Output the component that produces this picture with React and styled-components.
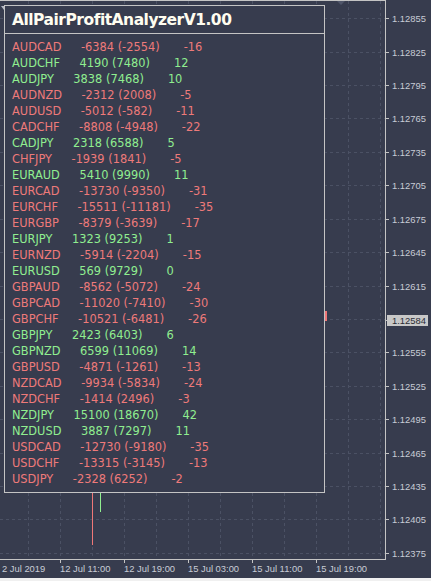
import React from 'react';
import styled, { createGlobalStyle } from 'styled-components';

const BG = '#373c4e';
const GRID = '#4b5164';
const AXIS = '#c4c4c4';
const LABEL = '#c8ccd6';

const pairs = [
  ['AUDCAD', -6384, -2554, -16],
  ['AUDCHF', 4190, 7480, 12],
  ['AUDJPY', 3838, 7468, 10],
  ['AUDNZD', -2312, 2008, -5],
  ['AUDUSD', -5012, -582, -11],
  ['CADCHF', -8808, -4948, -22],
  ['CADJPY', 2318, 6588, 5],
  ['CHFJPY', -1939, 1841, -5],
  ['EURAUD', 5410, 9990, 11],
  ['EURCAD', -13730, -9350, -31],
  ['EURCHF', -15511, -11181, -35],
  ['EURGBP', -8379, -3639, -17],
  ['EURJPY', 1323, 9253, 1],
  ['EURNZD', -5914, -2204, -15],
  ['EURUSD', 569, 9729, 0],
  ['GBPAUD', -8562, -5072, -24],
  ['GBPCAD', -11020, -7410, -30],
  ['GBPCHF', -10521, -6481, -26],
  ['GBPJPY', 2423, 6403, 6],
  ['GBPNZD', 6599, 11069, 14],
  ['GBPUSD', -4871, -1261, -13],
  ['NZDCAD', -9934, -5834, -24],
  ['NZDCHF', -1414, 2496, -3],
  ['NZDJPY', 15100, 18670, 42],
  ['NZDUSD', 3887, 7297, 11],
  ['USDCAD', -12730, -9180, -35],
  ['USDCHF', -13315, -3145, -13],
  ['USDJPY', -2328, 6252, -2],
];

const prices = [
  '1.12855', '1.12825', '1.12795', '1.12765', '1.12735', '1.12705',
  '1.12675', '1.12645', '1.12615', null, '1.12555', '1.12525',
  '1.12495', '1.12465', '1.12435', '1.12405', '1.12375',
];

const times = [
  { x: 2, text: '2 Jul 2019', tick: false },
  { x: 60, text: '12 Jul 11:00', tick: true },
  { x: 124, text: '12 Jul 19:00', tick: true },
  { x: 188, text: '15 Jul 03:00', tick: true },
  { x: 252, text: '15 Jul 11:00', tick: true },
  { x: 316, text: '15 Jul 19:00', tick: true },
];

const priceY = i => Math.round(18.3 + 33.4 * i) + 0.5;

function PriceChart() {
  const vLines = [];
  for (let x = 28; x <= 380; x += 32) vLines.push(x + 0.5);

  return (
    <ChartSvg width="431" height="578" viewBox="0 0 431 578">
      <rect x="0" y="0" width="431" height="578" fill={BG} />
      {/* grid */}
      {vLines.map(x => (
        <line key={x} x1={x} x2={x} y1="1" y2="559" stroke={GRID} strokeDasharray="3 3" />
      ))}
      {prices.map((p, i) => (
        <line key={i} x1="0" x2="385" y1={priceY(i)} y2={priceY(i)} stroke={GRID} strokeDasharray="3 3" />
      ))}
      {/* frame */}
      <line x1="0" x2="386" y1="0.5" y2="0.5" stroke={AXIS} />
      <line x1="385.5" x2="385.5" y1="0" y2="560" stroke={AXIS} />
      <line x1="0" x2="386" y1="559.5" y2="559.5" stroke={AXIS} />
      <polygon points="337,1 345,1 341,5" fill="#50566a" />
      <polygon points="1,6 7,6 4,10" fill="#b8bcc6" />
      {/* candles */}
      <line x1="92.5" x2="92.5" y1="480" y2="545" stroke="#f07878" />
      <line x1="100.5" x2="100.5" y1="480" y2="512" stroke="#90ee90" />
      <rect x="324" y="311" width="3" height="10" fill="#f07878" />
      {/* price axis */}
      {prices.map((p, i) =>
        p ? (
          <g key={p}>
            <line x1="386" x2="389" y1={priceY(i)} y2={priceY(i)} stroke={AXIS} />
            <AxisText x="392" y={priceY(i) + 3.5}>{p}</AxisText>
          </g>
        ) : null,
      )}
      <line x1="386" x2="389" y1="320.5" y2="320.5" stroke={AXIS} />
      <rect x="387" y="315" width="41" height="11" fill="#c8c8c8" />
      <AxisText x="392" y="324" dark>1.12584</AxisText>
      {/* time axis */}
      {times.map(t => (
        <g key={t.text}>
          {t.tick && <line x1={t.x + 0.5} x2={t.x + 0.5} y1="560" y2="563" stroke={AXIS} />}
          <AxisText x={t.x} y="572">{t.text}</AxisText>
        </g>
      ))}
    </ChartSvg>
  );
}

function ProfitPanel() {
  return (
    <Panel>
      <PanelTitle>AllPairProfitAnalyzerV1.00</PanelTitle>
      <PanelBody>
        {pairs.map(([name, profit, total, count]) => (
          <Row key={name} up={profit >= 0}>
            <Pair>{name}</Pair>
            <Profit>
              {profit} ({total})
            </Profit>
            <Count>{count}</Count>
          </Row>
        ))}
      </PanelBody>
    </Panel>
  );
}

export default function App() {
  return (
    <>
      <GlobalStyle />
      <Window>
        <ChartArea>
          <PriceChart />
          <ProfitPanel />
        </ChartArea>
        <StatusStrip />
      </Window>
    </>
  );
}

const GlobalStyle = createGlobalStyle`
  html, body {
    margin: 0;
    padding: 0;
    background: ${BG};
  }
`;

const Window = styled.div`
  width: 431px;
  height: 581px;
  display: flex;
  flex-direction: column;
  overflow: hidden;
  background: ${BG};
`;

const ChartArea = styled.div`
  position: relative;
  flex: 1;
`;

const ChartSvg = styled.svg`
  display: block;
`;

const AxisText = styled.text.withConfig({ shouldForwardProp: p => p !== 'dark' })`
  font-family: 'Liberation Sans', Arial, sans-serif;
  font-size: 9.4px;
  fill: ${p => (p.dark ? '#2a2d36' : LABEL)};
`;

const StatusStrip = styled.div`
  height: 3px;
  background: #f0f0f0;
`;

const Panel = styled.div`
  position: absolute;
  left: 4px;
  top: 5px;
  width: 319px;
  height: 486px;
  border: 1px solid #c4c4c4;
  background: ${BG};
  display: flex;
  flex-direction: column;
`;

const PanelTitle = styled.div`
  height: 28px;
  display: flex;
  align-items: center;
  padding: 1px 0 0 7px;
  box-sizing: border-box;
  border-bottom: 1px solid #c4c4c4;
  font-family: 'DejaVu Sans', Verdana, sans-serif;
  font-weight: bold;
  font-size: 15.5px;
  letter-spacing: -0.5px;
  color: #fffdf0;
`;

const PanelBody = styled.div`
  padding: 5px 0 0 7px;
`;

const Row = styled.div.withConfig({ shouldForwardProp: p => p !== 'up' })`
  height: 16px;
  line-height: 16px;
  white-space: nowrap;
  font-family: 'DejaVu Sans', Verdana, sans-serif;
  font-size: 11.4px;
  color: ${p => (p.up ? '#90ee90' : '#ee7a7a')};
`;

const Pair = styled.span``;

const Profit = styled.span`
  margin-left: 19.5px;
`;

const Count = styled.span`
  margin-left: 24px;
`;
